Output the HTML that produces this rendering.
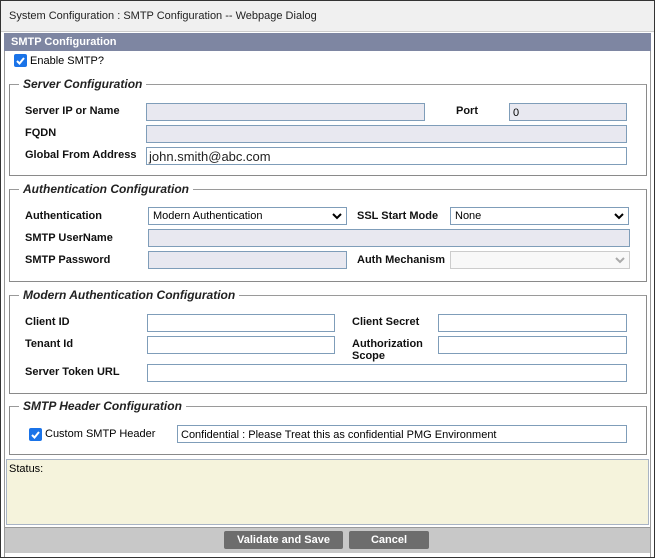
<!DOCTYPE html><html><head><style>
*{box-sizing:border-box;margin:0;padding:0}
body{width:655px;height:558px;background:#fff;font-family:"Liberation Sans",Arial,sans-serif;font-size:11px;color:#000;position:relative;overflow:hidden}
.a{position:absolute}
.lbl{position:absolute;font-weight:bold;font-size:11px;color:#111;margin-top:2px}
.in{position:absolute;height:18px;border:1px solid #7f9db9;background:#e8e8f0}
.w{background:#fff}
.fs{position:absolute;border:1px solid #8a8a8a;border-top-color:#9a9a9a}
.lg{position:absolute;background:#fff;font-style:italic;font-weight:bold;font-size:12px;color:#222;padding:0 4px;top:-8px;left:9px}
.sel{position:absolute;height:18px;border:1px solid #7f9db9;background:#fff;font-size:11px;padding:2px 4px}
.sel svg{position:absolute;right:4px;top:5px}
.cb{position:absolute;width:13px;height:13px;background:#1a73e8;border-radius:2px}
.btn{position:absolute;top:531px;height:18px;background:#6d6d6d;color:#fff;font-weight:bold;font-size:11px;text-align:center;line-height:18px;border-radius:2px}
</style></head><body>
<div class="a" style="left:0;top:0;width:655px;height:558px;border:1px solid #333"></div>
<div class="a" style="left:1px;top:1px;width:653px;height:31px;background:#f0f0f0;border-bottom:1px solid #ccc"></div>
<div class="a" style="left:9px;top:10px;font-size:11px;color:#222">System Configuration : SMTP Configuration -- Webpage Dialog</div>
<div class="a" style="left:4px;top:33px;width:647px;height:18px;background:#7e86a2;color:#fff;font-weight:bold;padding:3px 7px">SMTP Configuration</div>
<div class="a" style="left:4px;top:51px;width:647px;height:506px;border-left:1px solid #999;border-right:1px solid #999"></div>
<div class="cb" style="left:14px;top:54px"><svg width="13" height="13"><path d="M3 7l2.5 2.5L10 4" stroke="#fff" stroke-width="2" fill="none"/></svg></div>
<div class="a" style="left:30px;top:55px">Enable SMTP?</div>

<div class="fs" style="left:9px;top:84px;width:638px;height:92px"><div class="lg">Server Configuration</div></div>
<div class="lbl" style="left:25px;top:103px">Server IP or Name</div>
<div class="in" style="left:146px;top:103px;width:279px"></div>
<div class="lbl" style="left:456px;top:103px">Port</div>
<div class="in" style="left:509px;top:103px;width:118px;padding:3px 3px;font-size:11px">0</div>
<div class="lbl" style="left:25px;top:125px">FQDN</div>
<div class="in" style="left:146px;top:125px;width:481px"></div>
<div class="lbl" style="left:25px;top:147px">Global From Address</div>
<div class="in w" style="left:146px;top:147px;width:481px;font-size:13px;padding:1px 2px;color:#222">john.smith@abc.com</div>

<div class="fs" style="left:9px;top:189px;width:638px;height:93px"><div class="lg">Authentication Configuration</div></div>
<div class="lbl" style="left:25px;top:208px">Authentication</div>
<div class="sel" style="left:148px;top:207px;width:199px">Modern Authentication<svg width="10" height="7"><path d="M1 1l4 4 4-4" stroke="#000" stroke-width="2" fill="none"/></svg></div>
<div class="lbl" style="left:357px;top:208px">SSL Start Mode</div>
<div class="sel" style="left:450px;top:207px;width:179px">None<svg width="10" height="7"><path d="M1 1l4 4 4-4" stroke="#000" stroke-width="2" fill="none"/></svg></div>
<div class="lbl" style="left:25px;top:230px">SMTP UserName</div>
<div class="in" style="left:148px;top:229px;width:482px"></div>
<div class="lbl" style="left:25px;top:252px">SMTP Password</div>
<div class="in" style="left:148px;top:251px;width:199px"></div>
<div class="lbl" style="left:357px;top:252px">Auth Mechanism</div>
<div class="sel" style="left:450px;top:251px;width:180px;border-color:#ccc;background:#f8f8f8"><svg width="10" height="7"><path d="M1 1l4 4 4-4" stroke="#aaa" stroke-width="2" fill="none"/></svg></div>

<div class="fs" style="left:9px;top:295px;width:638px;height:99px"><div class="lg">Modern Authentication Configuration</div></div>
<div class="lbl" style="left:25px;top:314px">Client ID</div>
<div class="in w" style="left:147px;top:314px;width:188px"></div>
<div class="lbl" style="left:352px;top:314px">Client Secret</div>
<div class="in w" style="left:438px;top:314px;width:189px"></div>
<div class="lbl" style="left:25px;top:336px">Tenant Id</div>
<div class="in w" style="left:147px;top:336px;width:188px"></div>
<div class="lbl" style="left:352px;top:336px;line-height:12px">Authorization<br>Scope</div>
<div class="in w" style="left:438px;top:336px;width:189px"></div>
<div class="lbl" style="left:25px;top:364px">Server Token URL</div>
<div class="in w" style="left:147px;top:364px;width:480px"></div>

<div class="fs" style="left:9px;top:406px;width:638px;height:49px"><div class="lg">SMTP Header Configuration</div></div>
<div class="cb" style="left:29px;top:428px"><svg width="13" height="13"><path d="M3 7l2.5 2.5L10 4" stroke="#fff" stroke-width="2" fill="none"/></svg></div>
<div class="a" style="left:45px;top:428px">Custom SMTP Header</div>
<div class="in w" style="left:177px;top:425px;width:450px;padding:3px 3px;font-size:11px">Confidential : Please Treat this as confidential PMG Environment</div>

<div class="a" style="left:6px;top:459px;width:643px;height:66px;background:#f5f3dc;border:1px solid #a9b4c4;padding:3px 2px;font-size:11px">Status:</div>
<div class="a" style="left:5px;top:527px;width:645px;height:26px;background:#c8c8c8;border-top:1px solid #999"></div>
<div class="btn" style="left:224px;width:119px">Validate and Save</div>
<div class="btn" style="left:349px;width:80px">Cancel</div>
</body></html>
